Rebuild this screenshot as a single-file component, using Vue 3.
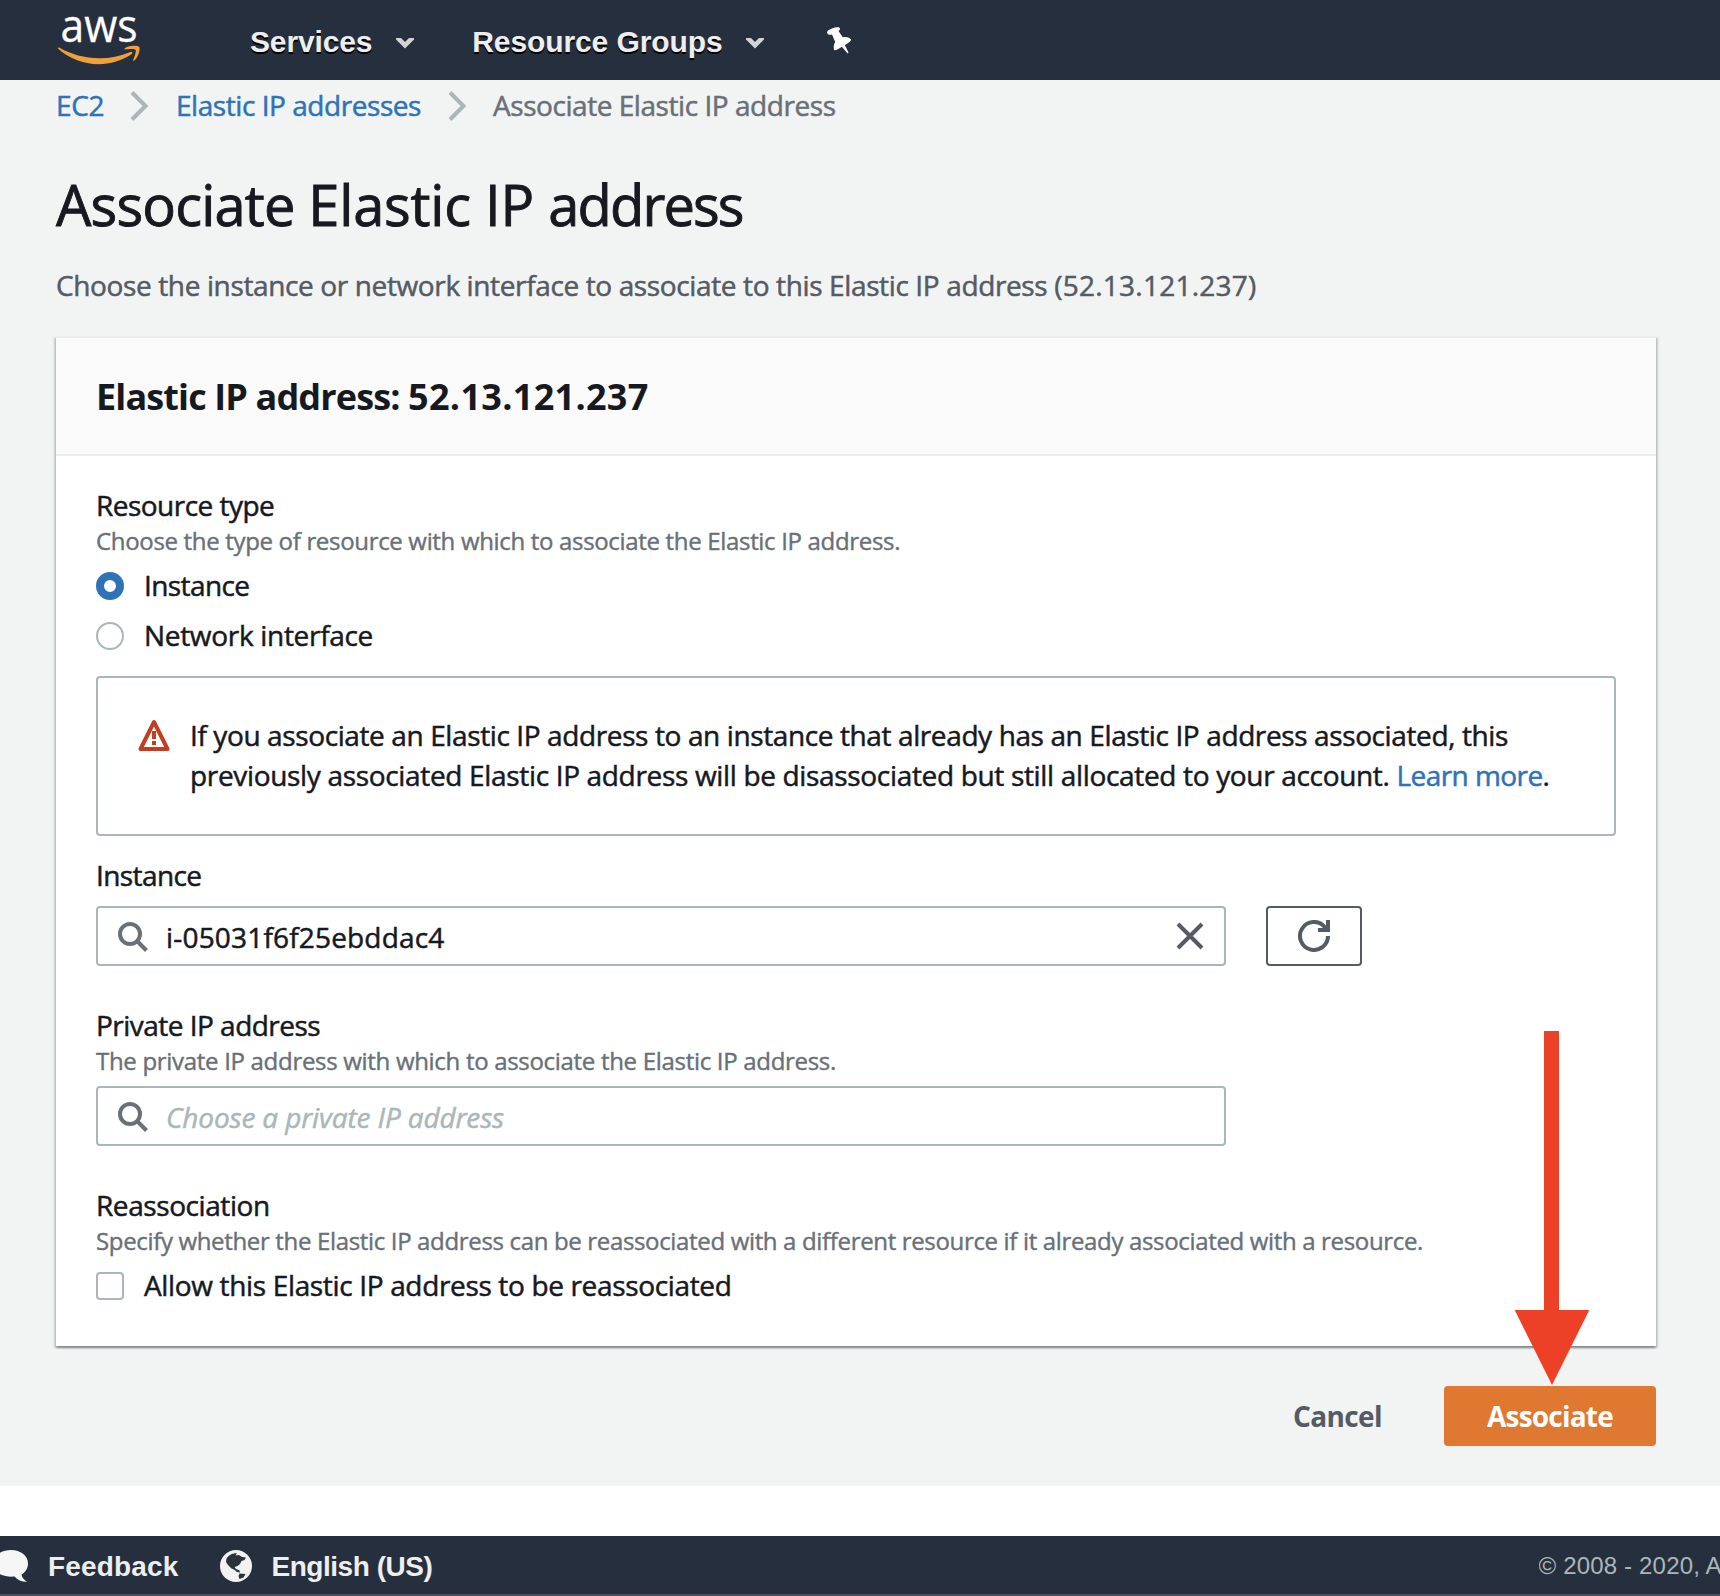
<script setup>
import { ref } from 'vue'

const resourceType = ref('instance')
const resourceTypes = [
  { id: 'instance', label: 'Instance' },
  { id: 'network', label: 'Network interface' },
]
const menus = [
  { id: 'services', label: 'Services' },
  { id: 'groups', label: 'Resource Groups' },
]
</script>

<template>
  <div class="page">
    <header class="topbar">
      <svg class="logo" width="84" height="66" viewBox="0 -12 84 66" role="img" aria-label="aws">
        <text class="logo-text" x="3.5" y="29.5" textLength="77" lengthAdjust="spacingAndGlyphs">aws</text>
        <g fill="#ef9f3c" transform="translate(0.4 3) scale(0.272)">
          <path d="M273.5,143.7c-32.9,24.3-80.7,37.2-121.8,37.2c-57.6,0-109.5-21.3-148.7-56.7c-3.1-2.8-0.3-6.6,3.4-4.4c42.4,24.6,94.7,39.5,148.8,39.5c36.5,0,76.6-7.6,113.5-23.2C274.2,133.6,278.9,139.7,273.5,143.7z" />
          <path d="M287.2,128.1c-4.2-5.4-27.8-2.6-38.5-1.3c-3.2,0.4-3.7-2.4-0.8-4.5c18.8-13.2,49.7-9.4,53.3-5c3.6,4.5-1,35.4-18.6,50.2c-2.7,2.3-5.3,1.1-4.1-1.9C282.5,155.7,291.4,133.4,287.2,128.1z" />
        </g>
      </svg>
      <nav class="menus">
        <a v-for="menu in menus" :key="menu.id" class="menu" :class="menu.id">
          <span>{{ menu.label }}</span>
          <svg class="caret" width="18" height="11" viewBox="0 0 18 11"><path d="M0 0H5L9 4L13 0H18V1.5L9 10.5L0 1.5Z" fill="#d2d2d2" /></svg>
        </a>
      </nav>
      <svg class="pin" width="25" height="27" viewBox="0 0 25 27">
        <path fill="#fff" d="M0 5.2C.2 2.6 8.600-.6 11.800.3C13.600 1.200 13.300 3 11.500 4L15.800 10.200C18.500 9.500 22 9.800 24.200 12.500C24 14.300 21 16.300 17.800 18L21.500 25.500L20.700 26.500L14.800 19.800C12.500 21.500 9.500 23.500 7.200 23.300C6.400 20.500 6.600 17.500 8.200 15L5 7.500C2.500 8.200.3 7.500 0 5.200Z" />
      </svg>
    </header>

    <main class="content">
      <nav class="crumbs">
        <a class="crumb link">EC2</a>
        <svg class="sep" width="20" height="32" viewBox="0 0 20 32"><path d="M2 2.500L15.500 16L2 29.500" fill="none" stroke="#aab7b8" stroke-width="4" /></svg>
        <a class="crumb link mid">Elastic IP addresses</a>
        <svg class="sep" width="20" height="32" viewBox="0 0 20 32"><path d="M2 2.500L15.500 16L2 29.500" fill="none" stroke="#aab7b8" stroke-width="4" /></svg>
        <span class="crumb current">Associate Elastic IP address</span>
      </nav>
      <h1>Associate <span class="loose">Elastic IP </span><span class="snug">address</span></h1>
      <p class="intro">Choose the instance or network interface to associate to this Elastic IP address <span class="digits">(52.13.121.237)</span></p>

      <section class="card">
        <div class="card-head"><h2>Elastic IP address: <span class="digits">52.13.121.237</span></h2></div>
        <div class="card-body">
          <div class="field">
            <div class="label">Resource type</div>
            <div class="hint">Choose the type of resource with which to associate the Elastic IP address.</div>
            <div class="options">
              <label v-for="o in resourceTypes" :key="o.id" class="option" :class="o.id" @click="resourceType = o.id">
                <span class="radio" :class="{ checked: resourceType === o.id }"></span>
                <span class="option-text">{{ o.label }}</span>
              </label>
            </div>
          </div>

          <div class="alert">
            <svg class="warn" width="32" height="32" viewBox="0 0 32 32">
              <path d="M16 3L29.500 30H2.500Z" fill="none" stroke="#c33d21" stroke-width="4" stroke-linejoin="round" />
              <path d="M16 12V20M16 22V26" stroke="#c33d21" stroke-width="4" />
            </svg>
            <div class="alert-text">
              <div class="line-a">If you associate an Elastic IP address to an instance that already has an Elastic IP address associated, this</div>
              <div class="line-b">previously associated Elastic IP address will be disassociated but still allocated to your account. <a class="link more">Learn more</a>.</div>
            </div>
          </div>

          <div class="field instance-field">
            <div class="label tight">Instance</div>
            <div class="input-row">
              <div class="input">
                <svg class="search" width="30" height="30" viewBox="0 0 30 30" fill="none" stroke="#687078" stroke-width="4"><circle cx="12" cy="12" r="10" /><path d="M19 19L28.500 28.500" /></svg>
                <span class="value">i-05031f6f25ebddac4</span>
                <svg class="clear" width="28" height="28" viewBox="0 0 28 28"><path d="M2 2L26 26M26 2L2 26" stroke="#545b64" stroke-width="4" /></svg>
              </div>
              <button class="refresh" aria-label="Refresh">
                <svg width="32" height="32" viewBox="0 0 32 32" fill="none" stroke="#545b64" stroke-width="4"><path d="M30 16A14 14 0 1 1 26.500 6.700L29 10" /><path d="M30 0V10H20" /></svg>
              </button>
            </div>
          </div>

          <div class="field private-field">
            <div class="label private">Private IP address</div>
            <div class="hint">The private IP address with which to associate the Elastic IP address.</div>
            <div class="input second">
              <svg class="search" width="30" height="30" viewBox="0 0 30 30" fill="none" stroke="#687078" stroke-width="4"><circle cx="12" cy="12" r="10" /><path d="M19 19L28.500 28.500" /></svg>
              <span class="placeholder">Choose a private IP address</span>
            </div>
          </div>

          <div class="field reassoc-field">
            <div class="label reassoc">Reassociation</div>
            <div class="hint">Specify whether the Elastic IP address can be reassociated with a different resource if it already associated with a resource.</div>
            <div class="options">
              <label class="option"><span class="checkbox"></span><span class="option-text">Allow this Elastic IP address to be reassociated</span></label>
            </div>
          </div>
        </div>
      </section>

      <div class="actions">
        <button class="cancel">Cancel</button>
        <button class="submit">
          <span>Associate</span>
          <svg class="pointer" width="76" height="354" viewBox="0 0 76 354"><path d="M30 0H45V279H75.300L38 354L.700 279H30Z" fill="#ec4126" /></svg>
        </button>
      </div>
    </main>

    <footer class="footer">
      <svg class="bubble" width="28" height="33" viewBox="0 0 28 33"><path d="M11 0C20.500 0 28 5.500 28 13.500C28 18.500 25 22.500 21.500 24.500C22 27.500 24 30 27 31.800C22 32 17.500 30 14.500 26.500C5 27.500-7 24-7 13.500C-7 5.500 1.500 0 11 0Z" fill="#f5f5f5" /></svg>
      <span class="feedback">Feedback</span>
      <svg class="globe" width="32" height="32" viewBox="0 0 32 32">
        <circle cx="16" cy="16" r="16" fill="#f2f2f2" />
        <path fill="#2b323c" d="M6.500 8.500C8.500 5 13 2.700 17 3.200L15.500 5.500L19 5L22 7L26 7.500L24.500 10L21.500 11L20 14L17.500 16L14.500 17L16 19L19.500 20.500L20 22.500L17 22L14 19.500L11.500 18.500L8 15L6 12ZM19.500 23.500L25.500 24L23.500 27.500L19.500 29L18.500 26Z" />
      </svg>
      <span class="language">English (US)</span>
      <span class="copyright">© 2008 - 2020, A</span>
    </footer>
  </div>
</template>

<style>
body { background: #fff; }
</style>

<style scoped>
* { box-sizing: border-box; }
.page {
  display: flex;
  flex-direction: column;
  width: 1720px;
  height: 1596px;
  overflow: hidden;
  font-family: "Open Sans", "Noto Sans", sans-serif;
  font-size: 28px;
  line-height: 38px;
  letter-spacing: -0.45px;
  color: #16191f;
  -webkit-text-stroke: 0.5px;
}
h1, h2, p { margin: 0; }
svg { display: block; flex: none; }
button { font: inherit; letter-spacing: inherit; margin: 0; padding: 0; border: 0; background: none; }

.topbar {
  display: flex;
  align-items: flex-start;
  height: 80px;
  flex: none;
  padding-left: 57px;
  background: #262f3e;
}
.logo { overflow: visible; }
.logo-text { font-size: 46px; letter-spacing: 0; fill: #fff; stroke: #fff; stroke-width: 0.3px; -webkit-text-stroke: 0; }
.menus { display: flex; margin-left: 109px; gap: 58px; }
.menu {
  display: flex;
  font: 700 30px/34px "Liberation Sans", Arial, sans-serif;
  color: #eee;
  text-shadow: 0 2px 0 #000;
  margin-top: 25px;
  letter-spacing: -0.15px;
  gap: 24px;
  -webkit-text-stroke: 0;
}
.menu.groups { letter-spacing: -0.1px; }
.caret { margin-top: 13px; }
.pin { margin: 26.500px 0 0 63px; }

.content {
  display: flex;
  flex-direction: column;
  height: 1406px;
  flex: none;
  padding: 5px 64px 0 56px;
  background: #f2f3f3;
}
.link { color: #2e73b8; }
.crumbs { display: flex; line-height: 40px; height: 40px; white-space: nowrap; }
.crumb:first-child { width: 74px; letter-spacing: -0.3px; }
.sep { margin-top: 5px; width: 20px; }
.crumb.mid { margin-left: 26px; width: 272px; }
.crumb.current { margin-left: 25px; color: #687078; }
h1 { margin-top: 43px; font-size: 56px; line-height: 72px; font-weight: 400; letter-spacing: -0.82px; -webkit-text-stroke: 0.9px; }
h1 .loose { letter-spacing: -0.22px; }
h1 .snug { letter-spacing: -1.85px; }
.intro { margin-top: 25px; line-height: 40px; color: #545b64; letter-spacing: -0.37px; white-space: nowrap; }
.intro .digits { letter-spacing: 0.25px; }

.card {
  margin-top: 31px;
  width: 1600px;
  height: 1010px;
  background: #fff;
  border-top: 2px solid #eaeded;
  box-shadow: 0 2px 2px rgba(0, 28, 36, 0.3), 2px 2px 2px rgba(0, 28, 36, 0.15), -2px 2px 2px rgba(0, 28, 36, 0.15);
}
.card-head { padding: 37px 40px 35px; background: #fafafa; border-bottom: 2px solid #eaeded; }
h2 { font-size: 36px; line-height: 44px; font-weight: 700; letter-spacing: -0.87px; -webkit-text-stroke: 0; }
h2 .digits { letter-spacing: 0.3px; }
.card-body { padding: 30px 40px 0; }
.label { height: 39px; letter-spacing: -0.52px; }
.label.tight { height: 38px; letter-spacing: -0.594px; }
.label.reassoc { letter-spacing: -0.42px; }
.hint { font-size: 24px; line-height: 32px; letter-spacing: -0.325px; color: #687078; white-space: nowrap; -webkit-text-stroke: 0.4px; }
.private-field .hint { letter-spacing: -0.305px; }
.reassoc-field .hint { letter-spacing: -0.34px; }
.options { display: flex; flex-direction: column; gap: 10px; padding-top: 9px; }
.option { display: flex; align-items: center; gap: 20px; height: 40px; letter-spacing: -0.344px; }
.option.instance { letter-spacing: -0.594px; }
.option.network { letter-spacing: -0.308px; }
.option-text { padding-bottom: 2px; }
.radio { width: 28px; height: 28px; border: 2px solid #aab7b8; border-radius: 50%; background: #fff; }
.radio.checked { border: 8px solid #2e73b8; }
.checkbox { width: 28px; height: 28px; border: 2px solid #aab7b8; border-radius: 4px; }

.alert {
  display: flex;
  gap: 20px;
  height: 160px;
  margin-top: 20px;
  padding: 37px 0 0 40px;
  border: 2px solid #aab7b8;
  border-radius: 4px;
}
.warn { margin-top: 4px; }
.alert-text { line-height: 40px; white-space: nowrap; }
.line-a { letter-spacing: -0.388px; }
.line-b { letter-spacing: -0.331px; }
.more { letter-spacing: -0.56px; }

.instance-field { margin-top: 20px; }
.input-row { display: flex; gap: 40px; margin-top: 12px; }
.input {
  display: flex;
  align-items: center;
  width: 1130px;
  height: 60px;
  padding: 0 20px;
  border: 2px solid #aab7b8;
  border-radius: 4px;
}
.search { margin-top: 1px; }
.value { margin-left: 18px; padding-top: 2px; letter-spacing: 0.18px; }
.clear { margin: 0 0 0 auto; }
.refresh { display: flex; align-items: center; justify-content: center; width: 96px; height: 60px; border: 2px solid #545b64; border-radius: 4px; }
.private-field, .reassoc-field { margin-top: 40px; }
.input.second { margin-top: 9px; }
.placeholder { margin-left: 18px; padding-top: 2px; font-style: italic; letter-spacing: -0.15px; color: #aab7b8; }

.actions { display: flex; justify-content: flex-end; gap: 62px; margin-top: 40px; font-weight: 700; -webkit-text-stroke: 0; }
.cancel { color: #545b64; letter-spacing: -0.6px; height: 60px; padding-bottom: 1px; }
.submit { position: relative; width: 212px; height: 60px; padding-bottom: 1px; border-radius: 4px; background: #df7831; color: #fff; letter-spacing: -0.8px; }
.pointer { position: absolute; left: 70px; bottom: 61px; pointer-events: none; }

.footer {
  display: flex;
  margin-top: 50px;
  height: 60px;
  flex: none;
  background: #262f3e;
  border-bottom: 2px solid #4b525c;
  font: 700 28px/32px "Liberation Sans", Arial, sans-serif;
  color: #eee;
  white-space: nowrap;
  -webkit-text-stroke: 0;
}
.bubble, .globe { margin-top: 14px; }
.feedback { margin: 15px 0 0 20px; width: 172px; letter-spacing: 0.157px; }
.language { margin: 15px 0 0 19.500px; letter-spacing: -0.465px; }
.copyright { margin: 14px 0 0 auto; width: 181.500px; flex: none; overflow: hidden; font-size: 24px; font-weight: 400; letter-spacing: 0.17px; color: #aab7b8; }
</style>
